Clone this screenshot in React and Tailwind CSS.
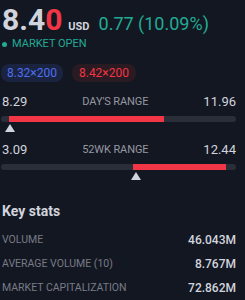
const RANGES = [
  { low: "8.29", high: "11.96", label: "DAY'S RANGE", from: 3.4, to: 69.4, marker: 3.8 },
  { low: "3.09", high: "12.44", label: "52WK RANGE", from: 56.2, to: 95.7, marker: 57.4 },
];

const STATS = [
  { label: "VOLUME", value: "46.043M" },
  { label: "AVERAGE VOLUME (10)", value: "8.767M" },
  { label: "MARKET CAPITALIZATION", value: "72.862M" },
];

function RangeBar({ low, high, label, from, to, marker }) {
  return (
    <div>
      <div className="flex items-center justify-between text-[13px] leading-[16px] text-[#d1d4dc]">
        <span className="pl-px">{low}</span>
        <span className="text-[11px] tracking-[-0.1px] text-[#9598a1]">{label}</span>
        <span>{high}</span>
      </div>
      <div className="relative mt-[6px] h-[6px] rounded-full bg-[#2a2e39]">
        <div
          className="absolute top-0 h-[6px] bg-[#f23645]"
          style={{ left: `${from}%`, width: `${to - from}%` }}
        />
        <svg
          className="absolute top-[8px] -translate-x-1/2"
          style={{ left: `${marker}%` }}
          width="10"
          height="8"
          viewBox="0 0 10 8"
        >
          <path d="M5 0 L10 8 L0 8 Z" fill="#d1d4dc" />
        </svg>
      </div>
    </div>
  );
}

export default function App() {
  return (
    <div
      className="h-[300px] w-[245px] overflow-hidden bg-[#131722] pl-px pr-[9px]"
      style={{ fontFamily: "Roboto, 'Liberation Sans', sans-serif" }}
    >
      {/* Price */}
      <div className="flex items-baseline pl-px pt-[2px]">
        <span className="text-[30px] font-bold leading-[36px] text-[#d1d4dc]">
          8.4<span className="text-[#f23645]">0</span>
        </span>
        <span className="ml-[6px] text-[11px] font-bold text-[#d1d4dc]">USD</span>
        <span className="ml-[9px] text-[18px] text-[#22ab94]">0.77 (10.09%)</span>
      </div>
      <div className="flex items-center gap-[5px] pl-px text-[11px] leading-[12px] text-[#22ab94]">
        <span className="h-[5px] w-[5px] rounded-full bg-[#22ab94]" />
        MARKET OPEN
      </div>

      {/* Bid / ask */}
      <div className="mt-[14px] flex gap-[9px]">
        <span className="flex h-[18px] w-[62px] items-center justify-center rounded-[8px] bg-[#1a2340] text-[12px] text-[#4f6ff0]">
          8.32×200
        </span>
        <span className="flex h-[18px] w-[64px] items-center justify-center rounded-[8px] bg-[#2a1a21] text-[12px] text-[#f23645]">
          8.42×200
        </span>
      </div>

      {/* Ranges */}
      <div className="mt-[12px] flex flex-col gap-[20px]">
        {RANGES.map((r) => (
          <RangeBar key={r.label} {...r} />
        ))}
      </div>

      {/* Key stats */}
      <h3 className="mt-[32px] pl-px text-[14px] font-bold leading-[18px] text-[#d1d4dc]">Key stats</h3>
      <dl className="mt-[14px] flex flex-col gap-[12px]">
        {STATS.map((s) => (
          <div key={s.label} className="flex items-center justify-between leading-[12px]">
            <dt className="pl-px text-[10.5px] text-[#787b86]">{s.label}</dt>
            <dd className="text-[12px] font-medium text-[#d1d4dc]">{s.value}</dd>
          </div>
        ))}
      </dl>
    </div>
  );
}
